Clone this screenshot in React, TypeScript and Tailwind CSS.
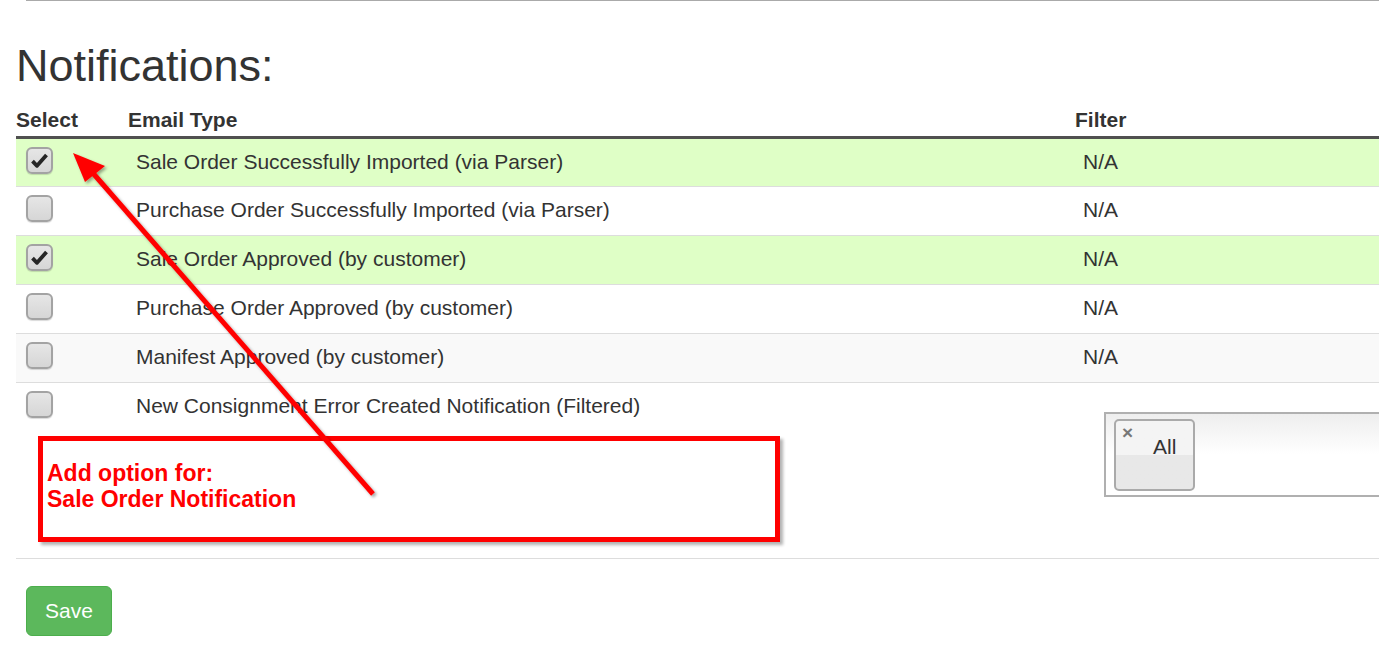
import React from "react";

type Row = {
  label: string;
  filter?: string;
  checked: boolean;
  tone: "green" | "white" | "stripe";
};

const rows: Row[] = [
  { label: "Sale Order Successfully Imported (via Parser)", filter: "N/A", checked: true, tone: "green" },
  { label: "Purchase Order Successfully Imported (via Parser)", filter: "N/A", checked: false, tone: "white" },
  { label: "Sale Order Approved (by customer)", filter: "N/A", checked: true, tone: "green" },
  { label: "Purchase Order Approved (by customer)", filter: "N/A", checked: false, tone: "white" },
  { label: "Manifest Approved (by customer)", filter: "N/A", checked: false, tone: "stripe" },
];

function CheckBox({ checked }: { checked: boolean }) {
  return (
    <div className="w-[27px] h-[27px] rounded-[6px] border-2 border-[#a3a3a3] bg-gradient-to-b from-[#e6e6e6] to-[#d6d6d6] shadow-[0_1px_1px_rgba(0,0,0,0.15)] flex items-center justify-center">
      {checked && (
        <svg width="17" height="15" viewBox="0 0 17 15">
          <path d="M1.5 8.2 L6 12.8 L15.5 2" fill="none" stroke="#262626" strokeWidth="3.8" strokeLinejoin="round" />
        </svg>
      )}
    </div>
  );
}

export default function App() {
  const toneClass = (t: Row["tone"]) =>
    t === "green" ? "bg-[#dfffc6]" : t === "stripe" ? "bg-[#f9f9f9]" : "bg-white";

  return (
    <div
      className="relative w-[1379px] h-[657px] overflow-hidden bg-white text-[#333]"
      style={{ fontFamily: '"Liberation Sans", Arial, sans-serif' }}
    >
      <div className="ml-[26px] border-t border-[#aaaaaa]" />

      <div className="pl-[16px]">
        <h2 className="mt-[40px] text-[45px] leading-[50px] font-normal">Notifications:</h2>

        <div className="mt-[14px] w-[1420px]">
          {/* header */}
          <div className="flex h-[34px] border-b-[3px] border-[#505050] text-[21px] font-bold leading-[30px]">
            <div className="w-[112px]">Select</div>
            <div className="w-[947px]">Email Type</div>
            <div className="flex-1">Filter</div>
          </div>

          {rows.map((r, i) => (
            <div
              key={i}
              className={`flex text-[21px] leading-[30px] ${toneClass(r.tone)} ${
                i === 0 ? "h-[47px]" : "h-[49px] border-t border-[#dddddd]"
              }`}
            >
              <div className="w-[112px] pl-[10px] pt-[8px]">
                <CheckBox checked={r.checked} />
              </div>
              <div className="w-[947px] pl-[8px] pt-[8px]">{r.label}</div>
              <div className="flex-1 pl-[8px] pt-[8px]">{r.filter}</div>
            </div>
          ))}

          {/* last row with filter select */}
          <div className="flex h-[177px] border-t border-b border-[#dddddd] bg-white text-[21px] leading-[30px]">
            <div className="w-[112px] pl-[10px] pt-[8px]">
              <CheckBox checked={false} />
            </div>
            <div className="w-[947px] pl-[8px] pt-[8px]">
              New Consignment Error Created Notification (Filtered)
            </div>
            <div className="flex-1 pl-[29px] pt-[29px]">
              <div className="h-[85px] border-2 border-[#b0b0b0] bg-gradient-to-b from-[#eeeeee] via-white to-white pl-[8px] pt-[5px]">
                <div className="relative w-[81px] h-[72px] rounded-[5px] border-2 border-[#aaaaaa] bg-gradient-to-b from-[#f4f4f4] from-50% to-[#e8e8e8] to-50%">
                  <span className="absolute left-[6px] top-[2px] text-[19px] leading-[20px] font-bold text-[#777]">×</span>
                  <span className="absolute left-[37px] top-[11px] text-[21px] leading-[30px]">All</span>
                </div>
              </div>
            </div>
          </div>
        </div>

        <button
          type="button"
          className="mt-[27px] ml-[10px] w-[86px] h-[50px] rounded-[6px] border border-[#4cae4c] bg-[#5cb85c] text-white text-[21px] leading-[30px]"
        >
          Save
        </button>
      </div>

      {/* annotation box */}
      <div className="absolute left-[38px] top-[436px] w-[742px] h-[106px] border-[5px] border-[#ff0000] shadow-[3px_3px_3px_rgba(0,0,0,0.3)] pl-[4px] pt-[19px] text-[#ff0000] font-bold text-[23px] leading-[26px]">
        <div>Add option for:</div>
        <div>Sale Order Notification</div>
      </div>

      {/* annotation arrow */}
      <svg className="absolute left-0 top-0 pointer-events-none" width="1379" height="657">
        <defs>
          <filter id="sh" x="-10%" y="-10%" width="130%" height="130%">
            <feDropShadow dx="2" dy="2" stdDeviation="1.5" floodColor="#000" floodOpacity="0.35" />
          </filter>
        </defs>
        <g filter="url(#sh)">
          <line x1="373" y1="494" x2="92" y2="172" stroke="#ff0000" strokeWidth="5" />
          <polygon points="73,153 85,182 105,166" fill="#ff0000" />
        </g>
      </svg>
    </div>
  );
}
